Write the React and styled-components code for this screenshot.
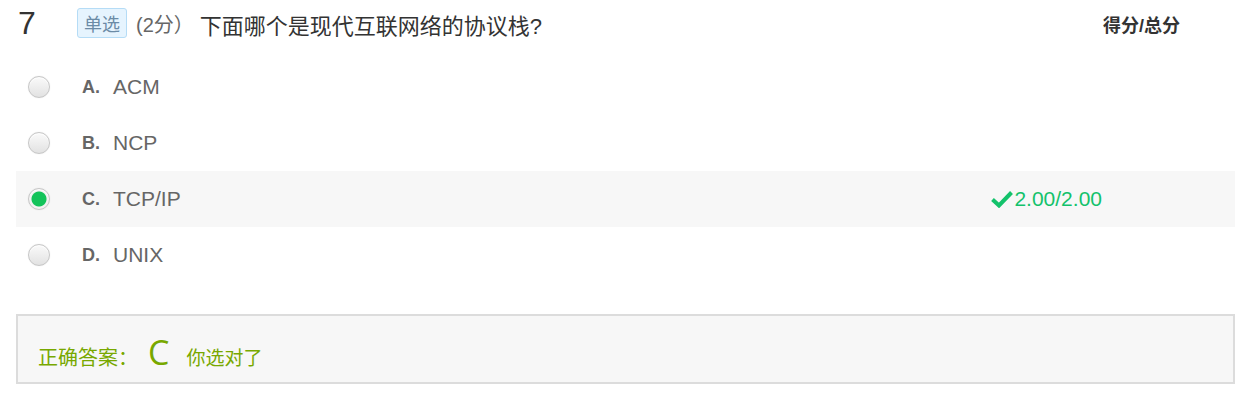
import React from "react";
import styled, { createGlobalStyle } from "styled-components";

const GlobalStyle = createGlobalStyle`
  body {
    margin: 0;
    background: #fff;
    font-family: "Liberation Sans", "Noto Sans CJK SC", sans-serif;
  }
`;

const options = [
  { key: "A", text: "ACM" },
  { key: "B", text: "NCP" },
  { key: "C", text: "TCP/IP", checked: true, score: "2.00/2.00" },
  { key: "D", text: "UNIX" },
];

function App() {
  return (
    <>
      <GlobalStyle />
      <Wrap>
        <Header>
          <Num>7</Num>
          <Badge>单选</Badge>
          <Points>(2分）</Points>
          <Question>下面哪个是现代互联网络的协议栈?</Question>
          <ScoreHead>得分/总分</ScoreHead>
        </Header>
        <OptionList>
          {options.map((o) => (
            <Option key={o.key} $active={o.checked}>
              <Radio $checked={o.checked} />
              <Letter>{o.key}.</Letter>
              <OptText>{o.text}</OptText>
              {o.score && (
                <Score>
                  <svg width="22" height="18" viewBox="0 0 22 18">
                    <path
                      d="M1.5 9.5 L8 15.5 L20.5 2.5"
                      fill="none"
                      stroke="#13c26b"
                      strokeWidth="4"
                    />
                  </svg>
                  {o.score}
                </Score>
              )}
            </Option>
          ))}
        </OptionList>
        <AnswerBox>
          <AnswerLabel>正确答案：</AnswerLabel>
          <AnswerKey>C</AnswerKey>
          <AnswerNote>你选对了</AnswerNote>
        </AnswerBox>
      </Wrap>
    </>
  );
}

export default App;

let Wrap = styled.div`
  width: 1219px;
  padding-left: 16px;
`;

let Header = styled.div`
  display: flex;
  align-items: center;
  height: 47px;
`;

let Num = styled.span`
  font-size: 32px;
  color: #333;
  width: 60px;
  padding-left: 2px;
  line-height: 47px;
`;

let Badge = styled.span`
  display: inline-flex;
  align-items: center;
  justify-content: center;
  height: 28px;
  padding: 0 6px;
  margin-left: -1px;
  margin-top: -1px;
  border: 1px solid #b5dcf6;
  border-radius: 3px;
  background: #e6f4fe;
  color: #6b8ba6;
  font-size: 18px;
`;

let Points = styled.span`
  margin-left: 9px;
  font-size: 20px;
  color: #666;
`;

let Question = styled.span`
  margin-left: 6px;
  font-size: 22px;
  color: #333;
`;

let ScoreHead = styled.span`
  margin-left: auto;
  margin-right: 55px;
  font-size: 18px;
  font-weight: bold;
  color: #333;
`;

let OptionList = styled.div`
  display: flex;
  flex-direction: column;
  margin-top: 12px;
`;

let Option = styled.div`
  display: flex;
  align-items: center;
  height: 56px;
  padding-left: 12px;
  background: ${(p) => (p.$active ? "#f7f7f7" : "transparent")};
`;

let Radio = styled.span`
  width: 20px;
  height: 20px;
  border-radius: 50%;
  border: 1px solid #c6c6c6;
  background: ${(p) =>
    p.$checked
      ? "radial-gradient(circle, #13c35a 0 7px, #f2f2f2 8px)"
      : "linear-gradient(#fafafa, #e2e2e2)"};
  box-shadow: inset 0 1px 1px #fff, 0 0 1px #ddd;
  flex-shrink: 0;
`;

let Letter = styled.span`
  margin-left: 32px;
  width: 31px;
  font-size: 18px;
  font-weight: bold;
  color: #666;
`;

let OptText = styled.span`
  font-size: 21px;
  color: #666;
`;

let Score = styled.span`
  margin-left: auto;
  margin-right: 133px;
  display: flex;
  align-items: center;
  gap: 1px;
  font-size: 21px;
  color: #13c26b;
`;

let AnswerBox = styled.div`
  margin-top: 31px;
  height: 66px;
  border: 2px solid #dcdcdc;
  background: #f7f7f7;
  display: flex;
  align-items: baseline;
  padding: 0 20px;
  line-height: 72px;
  color: #78a800;
`;

let AnswerLabel = styled.span`
  font-size: 20px;
`;

let AnswerKey = styled.span`
  font-size: 34px;
  margin-left: 10px;
  font-family: "Open Sans", "Liberation Sans", sans-serif;
`;

let AnswerNote = styled.span`
  font-size: 19px;
  margin-left: 17px;
`;
